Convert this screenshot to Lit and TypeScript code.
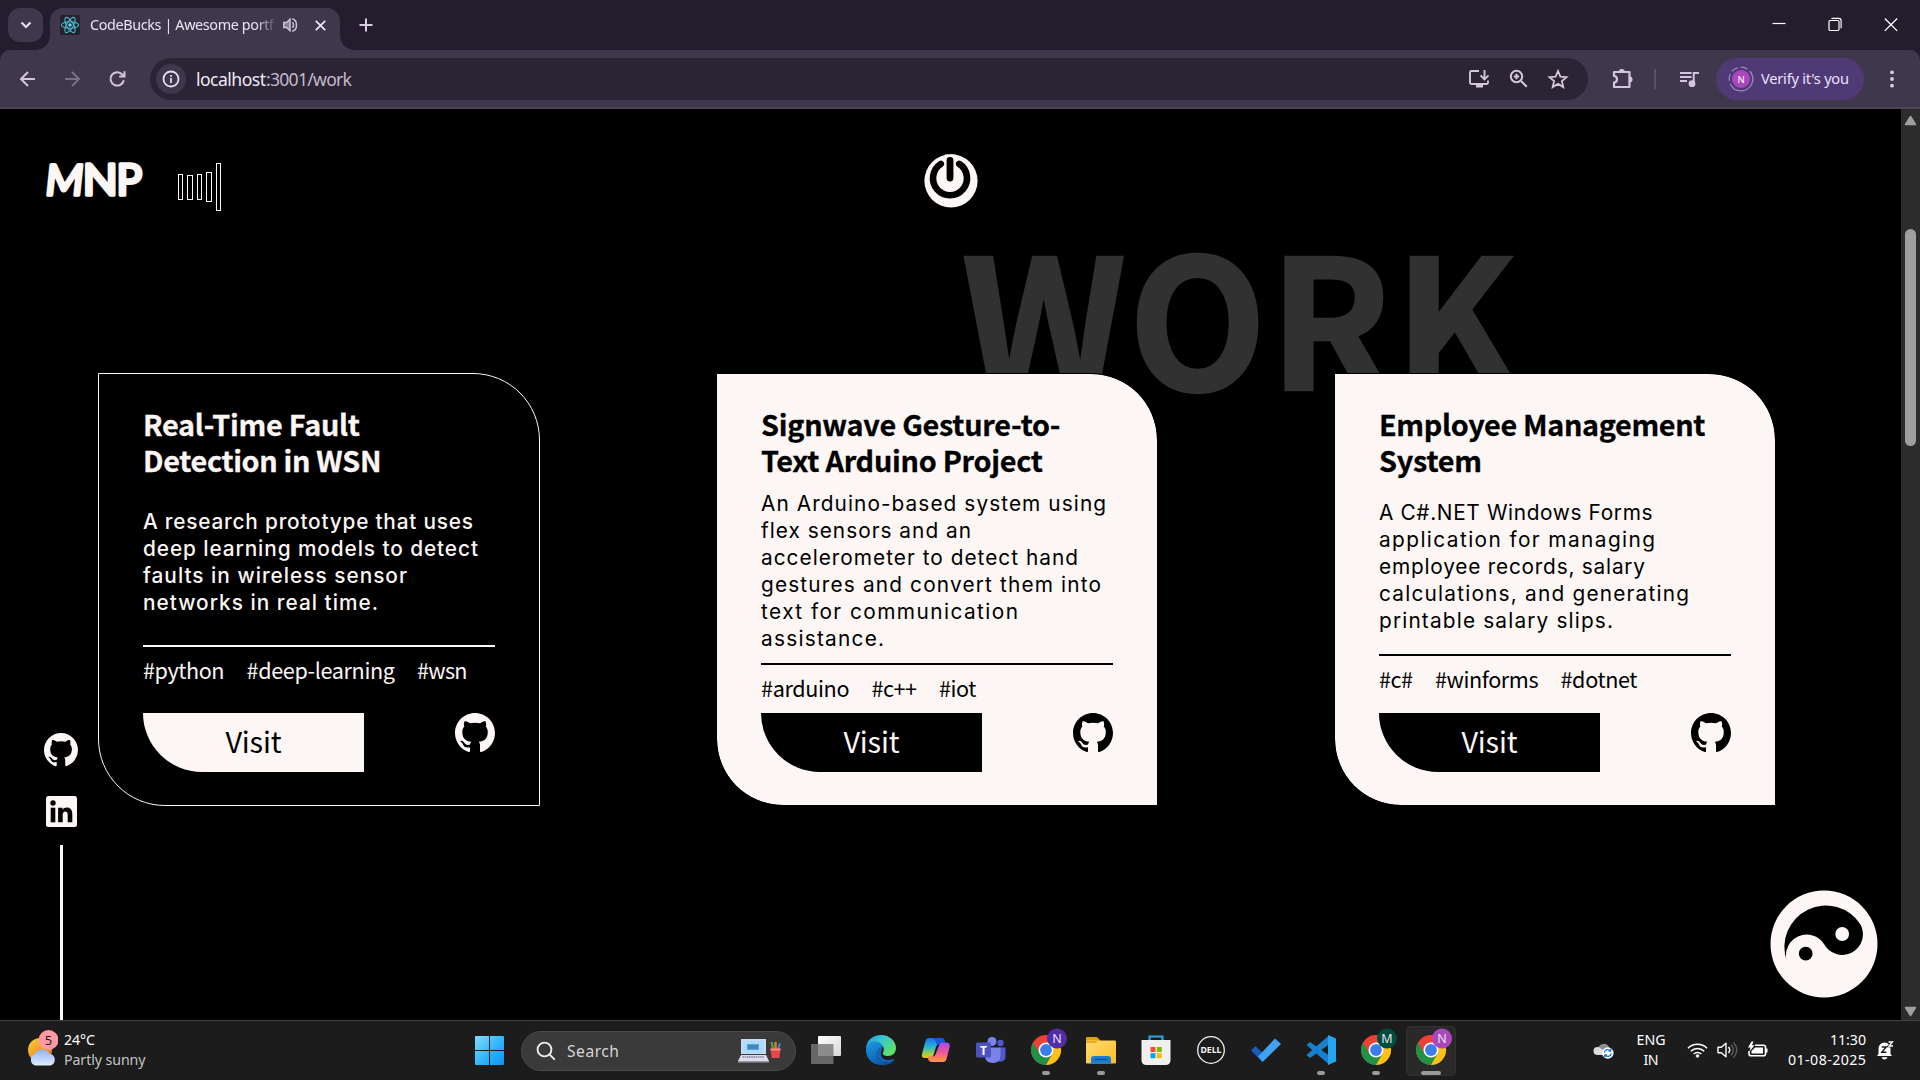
import { LitElement, html, svg, css, nothing } from "lit";
import { customElement, property } from "lit/decorators.js";
import { classMap } from "lit/directives/class-map.js";

/* One line of text whose tracking is computed so that it spans `w` pixels. */
@customElement("fit-text")
class FitText extends LitElement {
  static styles = css`
    :host { display: inline-block; white-space: nowrap; }
    .line { display: inline-block; white-space: pre; }
  `;
  @property() text = "";
  @property({ type: Number }) w = 0;

  updated() {
    const el = this.renderRoot.querySelector(".line") as HTMLElement;
    el.style.letterSpacing = "0px";
    const natural = el.getBoundingClientRect().width;
    const ls = (this.w - natural) / Math.max(1, this.text.length - 1);
    el.style.letterSpacing = ls.toFixed(3) + "px";
    el.style.marginRight = (-ls).toFixed(3) + "px";
  }

  render() {
    return html`<span class="line">${this.text}</span>`;
  }
}

const githubPath =
  "M12 0C5.37 0 0 5.37 0 12c0 5.31 3.435 9.795 8.205 11.385.6.105.825-.255.825-.57 0-.285-.015-1.23-.015-2.235-3.015.555-3.795-.735-4.035-1.41-.135-.345-.72-1.41-1.23-1.695-.42-.225-1.02-.78-.015-.795.945-.015 1.62.87 1.845 1.23 1.08 1.815 2.805 1.305 3.495.99.105-.78.42-1.305.765-1.605-2.67-.3-5.46-1.335-5.46-5.925 0-1.305.465-2.385 1.23-3.225-.12-.3-.54-1.53.12-3.18 0 0 1.005-.315 3.3 1.23.96-.27 1.98-.405 3-.405s2.04.135 3 .405c2.295-1.56 3.3-1.23 3.3-1.23.66 1.65.24 2.88.12 3.18.765.84 1.23 1.905 1.23 3.225 0 4.605-2.805 5.625-5.475 5.925.435.375.81 1.095.81 2.22 0 1.605-.015 2.895-.015 3.3 0 .315.225.69.825.57A12.02 12.02 0 0024 12c0-6.63-5.37-12-12-12z";

const github = (size: number) => html`
  <svg width=${size} height=${size} viewBox="0 0 24 24" fill="currentColor"><path d=${githubPath}></path></svg>`;

type Line = [string, number];
interface Project { title: Line[]; desc: Line[]; tags: Line[]; dark: boolean; }

const projects: Project[] = [
  {
    dark: true,
    title: [["Real-Time Fault", 217], ["Detection in WSN", 238.5]],
    desc: [
      ["A research prototype that uses", 330],
      ["deep learning models to detect", 335],
      ["faults in wireless sensor", 264],
      ["networks in real time.", 235],
    ],
    tags: [["#python", 81.5], ["#deep-learning", 148.5], ["#wsn", 50.5]],
  },
  {
    dark: false,
    title: [["Signwave Gesture-to-", 299.5], ["Text Arduino Project", 282]],
    desc: [
      ["An Arduino-based system using", 345],
      ["flex sensors and an", 210],
      ["accelerometer to detect hand", 317],
      ["gestures and convert them into", 340],
      ["text for communication", 257],
      ["assistance.", 123],
    ],
    tags: [["#arduino", 88.5], ["#c++", 45.5], ["#iot", 37.5]],
  },
  {
    dark: false,
    title: [["Employee Management", 326.5], ["System", 103]],
    desc: [
      ["A C#.NET Windows Forms", 273.5],
      ["application for managing", 276],
      ["employee records, salary", 266],
      ["calculations, and generating", 310],
      ["printable salary slips.", 234],
    ],
    tags: [["#c#", 34], ["#winforms", 103.5], ["#dotnet", 77]],
  },
];

@customElement("work-card")
class WorkCard extends LitElement {
  static styles = css`
    :host { display: block; }
    .card {
      box-sizing: border-box; width: 442px; height: 433px; padding: 33px 44px;
      border: 1px solid #000; border-radius: 0 67px 0 67px;
      background: #fcf6f4; color: #000; background-clip: padding-box;
      display: flex; flex-direction: column; justify-content: space-between;
      font-family: "Noto Sans CJK SC", sans-serif;
    }
    .card.dark { background: #000; color: #fcf6f4; border-color: #fcf6f4; }
    .title { margin: -1px 0 1px; font-size: 28.8px; font-weight: 700; height: 72px; -webkit-text-stroke: .3px currentColor; }
    .row { display: block; height: 36px; line-height: 36px; }
    .desc { font-family: "Inter", sans-serif; font-size: 20.8px; }
    .dark .desc { font-weight: 500; }
    .desc .row { height: 27px; line-height: 27px; }
    .tags {
      border-top: 2px solid currentColor; height: 37px; display: flex; gap: 22px;
      font-size: 21.6px; line-height: 46px;
    }
    .foot { display: flex; justify-content: space-between; height: 59px; }
    .visit {
      width: 221px; height: 59px; border-radius: 0 0 0 60px; background: #000; color: #fcf6f4;
      font-size: 28.8px; line-height: 56px; text-align: center; text-decoration: none;
    }
    .dark .visit { background: #fcf6f4; color: #000; }
    svg { display: block; }
    .git { color: inherit; height: 40px; }
  `;
  @property({ attribute: false }) project!: Project;

  render() {
    const p = this.project;
    const line = ([t, w]: Line) => html`<span class="row"><fit-text .text=${t} .w=${w}></fit-text></span>`;
    return html`
      <article class=${classMap({ card: true, dark: p.dark })}>
        <h2 class="title">${p.title.map(line)}</h2>
        <div class="desc">${p.desc.map(line)}</div>
        <div class="tags">${p.tags.map(([t, w]) => html`<fit-text .text=${t} .w=${w}></fit-text>`)}</div>
        <footer class="foot">
          <a class="visit"><fit-text .text=${"Visit"} .w=${56}></fit-text></a>
          <a class="git">${github(40)}</a>
        </footer>
      </article>`;
  }
}

@customElement("browser-bar")
class BrowserBar extends LitElement {
  static styles = css`
    :host { display: block; font-family: "Noto Sans", "Open Sans", sans-serif; }
    svg { display: block; flex: none; }
    .strip { height: 50px; background: #241d2d; display: flex; align-items: flex-start; }
    .chevron {
      width: 35px; height: 34px; margin: 8px 7px 0 8px; border-radius: 12px; background: #3f374b;
      display: grid; place-items: center;
    }
    .tab {
      width: 290px; height: 42px; margin-top: 8px; background: #3f374b; border-radius: 13px 13px 0 0;
      display: flex; align-items: center; box-sizing: border-box; padding: 0 0 8px 10px; position: relative;
    }
    .tab::before, .tab::after {
      content: ""; position: absolute; bottom: 0; width: 14px; height: 14px;
    }
    .tab::before { left: -14px; background: radial-gradient(circle at 0 0, transparent 13.5px, #3f374b 14px); }
    .tab::after { right: -14px; background: radial-gradient(circle at 100% 0, transparent 13.5px, #3f374b 14px); }
    .name {
      width: 184px; margin-left: 10px; overflow: hidden; font-size: 14.4px; line-height: 22px; color: #ece4f2;
      -webkit-mask-image: linear-gradient(90deg, #000 90%, transparent 102%);
      mask-image: linear-gradient(90deg, #000 90%, transparent 102%);
    }
    .sound { margin-left: 9px; }
    .close { margin-left: 17px; }
    .plus { margin: 18px 0 0 19px; }
    .grow { flex: 1; }
    .win { display: flex; gap: 42px; margin: 17px 22px 0 0; }
    .bar {
      height: 59px; box-sizing: border-box; background: #3f374b; border-bottom: 2px solid #4c4653;
      border-radius: 10px 10px 0 0; display: flex; align-items: center; position: relative;
      color: #d3c5df;
    }
    .shell { background: #241d2d; }
    .nav { display: flex; gap: 26px; margin-left: 18px; width: 132px; }
    .dim { opacity: .4; }
    .url {
      width: 1438px; height: 42px; border-radius: 21px; background: #2b2435; display: flex; align-items: center;
      box-sizing: border-box; padding: 0 19px 0 6px;
    }
    .info { width: 30px; height: 30px; border-radius: 50%; background: #3f374b; display: grid; place-items: center; }
    .host { margin-left: 10px; font-size: 17.6px; color: #efe9f5; line-height: 24px; }
    .path { font-size: 17.6px; color: #c3bacb; line-height: 24px; }
    .acts { display: flex; gap: 18.500px; color: #d3c8d8; }
    .ext { margin-left: 24px; }
    .sep { width: 2px; height: 20px; background: #5b4f6c; margin-left: 20px; }
    .media { margin-left: 23px; }
    .verify {
      width: 148px; height: 42px; border-radius: 21px; background: #503a76; margin-left: 16px;
      display: flex; align-items: center; color: #ece0fb; font-size: 14.6px; box-sizing: border-box; padding-left: 12px;
    }
    .verify fit-text { margin: -2px 0 0 7px; }
    .menu { margin-left: 24px; }
  `;

  render() {
    return html`
      <div class="strip">
        <div class="chevron">
          <svg width="12" height="12" viewBox="0 0 12 12" fill="none" stroke="#e6dcee" stroke-width="2.2"><path d="M1.5 3.5 6 8l4.500-4.500"></path></svg>
        </div>
        <div class="tab">
          <svg width="20" height="20" viewBox="0 0 20 20">
            <rect width="20" height="20" rx="2" fill="#22242a"></rect>
            <g fill="none" stroke="#4fb8d4" stroke-width="1.1">
              <ellipse cx="10" cy="10" rx="8.600" ry="3.300"></ellipse>
              <ellipse cx="10" cy="10" rx="8.600" ry="3.300" transform="rotate(60 10 10)"></ellipse>
              <ellipse cx="10" cy="10" rx="8.600" ry="3.300" transform="rotate(120 10 10)"></ellipse>
            </g>
            <circle cx="10" cy="10" r="1.700" fill="#6fd8ee"></circle>
          </svg>
          <div class="name"><fit-text .text=${"CodeBucks | Awesome portf"} .w=${184}></fit-text></div>
          <svg class="sound" width="15" height="16" viewBox="0 0 15 16" fill="none" stroke="#cdc3d6" stroke-width="1.5">
            <path d="M.8 5.500h2.800l3.400-3.300v11.600L3.600 10.500H.8z" fill="#887f95"></path>
            <path d="M9.300 5.200c1.600 1.400 1.600 4.200 0 5.600M9.300 1.700c5.600 1.700 5.600 10.900 0 12.600"></path>
          </svg>
          <svg class="close" width="11" height="11" viewBox="0 0 11 11" stroke="#ece4f2" stroke-width="1.800"><path d="M.8.800l9.400 9.400M10.200.800.800 10.200"></path></svg>
        </div>
        <svg class="plus" width="14" height="14" viewBox="0 0 14 14" stroke="#d9cbe6" stroke-width="2"><path d="M7 .500v13M.500 7h13"></path></svg>
        <div class="grow"></div>
        <div class="win">
          <svg width="14" height="15" stroke="#fff" stroke-width="1.200"><path d="M.500 6.500h13"></path></svg>
          <svg width="14" height="15" fill="none" stroke="#fff" stroke-width="1.200"><rect x="1" y="3.500" width="10" height="10" rx="1.200"></rect><path d="M3.500 1.300h7.300q2.300 0 2.300 2.300v7.600"></path></svg>
          <svg width="14" height="15" stroke="#fff" stroke-width="1.300"><path d="M.800 1.500l12.400 12.400M13.200 1.500.800 13.900"></path></svg>
        </div>
      </div>
      <div class="shell"><div class="bar">
        <div class="nav">
          <svg width="19" height="18" viewBox="0 0 19 18" fill="none" stroke="currentColor" stroke-width="2"><path d="M17 9H3.500M10 2 3 9l7 7"></path></svg>
          <svg class="dim" width="19" height="18" viewBox="0 0 19 18" fill="none" stroke="currentColor" stroke-width="2"><path d="M2 9h13.500M9 2l7 7-7 7"></path></svg>
          <svg width="19" height="18" viewBox="0 0 19 18" fill="none" stroke="currentColor" stroke-width="2"><path d="M15.800 10.200A6.700 6.700 0 1 1 14.300 4.500L16 6.300M16.500 1.200v5.300h-5.300"></path></svg>
        </div>
        <div class="url">
          <div class="info">
            <svg width="18" height="18" viewBox="0 0 18 18" fill="none" stroke="#e6dcee" stroke-width="1.800"><circle cx="9" cy="9" r="7.500"></circle><path d="M9 8v5M9 5v1.800"></path></svg>
          </div>
          <span class="host"><fit-text .text=${"localhost"} .w=${70}></fit-text></span>
          <span class="path"><fit-text .text=${":3001/work"} .w=${86}></fit-text></span>
          <div class="grow"></div>
          <div class="acts">
            <svg width="22" height="20" viewBox="0 0 22 20" fill="none" stroke="currentColor" stroke-width="1.900"><path d="M11 2H3.500Q2 2 2 3.500v10Q2 15 3.500 15h15q1.500 0 1.500-1.500v-2M16.500 1v9M12.500 6.300l4 4 4-4"></path><path d="M8 17.200h7" stroke-width="2.600"></path></svg>
            <svg width="20" height="20" viewBox="0 0 20 20" fill="none" stroke="currentColor" stroke-width="2"><circle cx="7.500" cy="7.500" r="5.700"></circle><path d="M11.800 11.800l6 6M7.500 4.800v5.400M4.800 7.500h5.400"></path></svg>
            <svg width="22" height="20" viewBox="0 0 22 20" fill="none" stroke="currentColor" stroke-width="1.800"><path d="M11 2l2.400 5.600 6.100.500-4.600 4 1.400 6-5.300-3.200-5.300 3.200 1.400-6-4.600-4 6.100-.500z"></path></svg>
          </div>
        </div>
        <svg class="ext" width="22" height="22" viewBox="0 0 22 22" fill="none" stroke="currentColor" stroke-width="2.200" stroke-linejoin="round"><path d="M2 4h15.500v15H2v-4.300c4-.600 4-6.200 0-6.800z"></path><path d="M7.500 4a2 2 0 0 1 4.500 0zM17.500 9.200a2 2 0 0 1 0 4.600z" fill="currentColor" stroke-width="1.500"></path></svg>
        <div class="sep"></div>
        <svg class="media" width="21" height="18" viewBox="0 0 21 18" fill="none" stroke="currentColor" stroke-width="2"><path d="M1 3h11.500M1 7h11.500M1 11h7M14.700 14V3H20"></path><circle cx="13" cy="13.700" r="2.400" fill="currentColor"></circle></svg>
        <div class="verify">
          <svg width="26" height="26" viewBox="0 0 26 26"><circle cx="13" cy="13" r="11.800" fill="none" stroke="#9a82c4" stroke-width="1.300" stroke-dasharray="32 3 7 3 7 3 7 3"></circle><circle cx="13" cy="13" r="9" fill="#ab47bc"></circle><text x="13" y="16.500" font-size="9.500" text-anchor="middle" fill="#fff">N</text></svg>
          <fit-text .text=${"Verify it's you"} .w=${88}></fit-text>
        </div>
        <svg class="menu" width="8" height="20" viewBox="0 0 8 20" fill="#d9cbe6"><circle cx="4" cy="3.300" r="1.900"></circle><circle cx="4" cy="10" r="1.900"></circle><circle cx="4" cy="16.700" r="1.900"></circle></svg>
      </div></div>`;
  }
}

const chrome = (letter: string, color: string) => svg`
  <g transform="translate(10 10)">
    <circle cx="15" cy="15" r="15" fill="#ea4335"></circle>
    <path d="M2.010 7.500A15 15 0 0 0 15 30L21.500 18.750H8.500z" fill="#1f9246"></path>
    <path d="M28 7.500A15 15 0 0 1 15 30l6.500-11.250L15 7.500z" fill="#fbc116"></path>
    <circle cx="15" cy="15" r="7.500" fill="#fff"></circle><circle cx="15" cy="15" r="5.900" fill="#3b7ded"></circle>
  </g>
  <circle cx="36" cy="13.500" r="10" fill=${color}></circle>
  <text x="36" y="18" font-size="12.500" text-anchor="middle" fill="#e8e0ee">${letter}</text>`;

const apps = [
  { run: 0, art: svg`<defs><linearGradient id="tv" x1="0" y1="0" x2="1" y2="1"><stop stop-color="#fff"></stop><stop offset="1" stop-color="#d8d8d8"></stop></linearGradient></defs>
      <rect x="17" y="11" width="23" height="20" rx="1" fill="url(#tv)"></rect><rect x="10" y="19" width="22.500" height="20" rx="1" fill="#787878" fill-opacity=".82"></rect>` },
  { run: 0, art: svg`<defs><linearGradient id="e1" x1="0" y1="0" x2="1" y2=".5"><stop stop-color="#1f9ee0"></stop><stop offset=".5" stop-color="#37c6d0"></stop><stop offset="1" stop-color="#5fe06a"></stop></linearGradient><linearGradient id="e2" x1="0" y1="0" x2=".6" y2="1"><stop stop-color="#1b9de2"></stop><stop offset="1" stop-color="#0b55a8"></stop></linearGradient></defs>
      <path d="M10 23C11 15 17 10 25 10c9 0 15 6.500 15 13 0 5-3.500 8-8 8-3.500 0-6-1.500-5-3.500 3-5-2-10-8-9-5 .700-8 3-9 4.500z" fill="url(#e1)"></path>
      <path d="M10 25c0-6 5-9.500 10.500-8.500 4 .700 6 3.500 6 6-7 .500-8 10-1 13.500 5 2.500 9 1.500 12.500-.500C35 39 30.500 40 26 40c-9 0-16-6-16-15z" fill="url(#e2)"></path>
      <path d="M26.500 22.500c-7 .500-8 10-1 13.500 5 2.500 9.500 1.500 12.500-1 .500-1-.200-1.300-1-1-5 2.500-11 .500-12-4-.400-3 .500-5 1.500-7.500z" fill="#1266b8"></path>` },
  { run: 0, art: svg`<defs><linearGradient id="c1" x1="0" y1="0" x2="0" y2="1"><stop stop-color="#1b6ff0"></stop><stop offset=".45" stop-color="#27b5d8"></stop><stop offset=".75" stop-color="#8fd14a"></stop><stop offset="1" stop-color="#f4c320"></stop></linearGradient><linearGradient id="c2" x1="0" y1="0" x2="0" y2="1"><stop stop-color="#a24af0"></stop><stop offset=".5" stop-color="#f0569a"></stop><stop offset="1" stop-color="#fb9a3c"></stop></linearGradient></defs>
      <path d="M18 13h12q3 0 3.500 3l.800 3h-6q-2.500 0-3.200 2.500L22.500 30q-.800 3-4 3H14q-4 0-3-4l3.500-13q.800-3 3.500-3z" fill="url(#c1)"></path>
      <path d="M18 13h12q3 0 3.500 3l.800 3h-6l-2 1-2-4q-1-3-6.300-3z" fill="#1c56d8"></path>
      <path d="M32 37H21q-3 0-4-3l-.500-2.500h5q2.500 0 3.200-2.500L28 20.500q.800-3 4-3H35q4.500 0 3.700 4l-3 12q-.900 3.500-3.700 3.500z" fill="url(#c2)"></path>` },
  { run: 0, art: svg`<circle cx="26" cy="16.500" r="4.500" fill="#7b83eb"></circle><circle cx="34.500" cy="18" r="3.200" fill="#5059c9"></circle>
      <path d="M33 22.500h6.500v9q0 5-6.500 5.500z" fill="#5059c9"></path><path d="M19 22.500h15.500V31q0 7-7.700 7-7.800 0-7.800-7z" fill="#7b83eb"></path>
      <rect x="10" y="17.500" width="15" height="15" rx="1.500" fill="#4b53bc"></rect><text x="17.500" y="29.500" font-size="12" font-weight="700" text-anchor="middle" fill="#fff">T</text>` },
  { run: 8, art: chrome("N", "#512da8") },
  { run: 8, art: svg`<defs><linearGradient id="f1" x1="0" y1="0" x2="1" y2="1"><stop stop-color="#ffdc70"></stop><stop offset="1" stop-color="#fbbd28"></stop></linearGradient></defs>
      <path d="M10 13q0-1 1-1h9q1 0 1.700.700L24 15v6H10z" fill="#e0a110"></path><rect x="10" y="15.500" width="30" height="23" rx="1.200" fill="url(#f1)"></rect><path d="M10 21v-5h12l-2 2H10z" fill="#e9ad22"></path>
      <path d="M15 38.500V34q0-3 3-3h14q3 0 3 3v4.500z" fill="#1a7fd4"></path><path d="M18.500 34.500h13" stroke="#0b4f93" stroke-width="1.300"></path>` },
  { run: 0, art: svg`<path d="M18.500 17v-5.500h13V17" fill="none" stroke="#2fa4dd" stroke-width="2.200"></path><path d="M10.500 15h29v20q0 5-5 5h-19q-5 0-5-5z" fill="#f0f0f0"></path>
      <rect x="19.500" y="22" width="5" height="5" fill="#f25022"></rect><rect x="25.800" y="22" width="5" height="5" fill="#7fba00"></rect><rect x="19.500" y="28.200" width="5" height="5" fill="#00a4ef"></rect><rect x="25.800" y="28.200" width="5" height="5" fill="#ffb900"></rect>` },
  { run: 0, art: svg`<circle cx="25" cy="25" r="13.300" fill="#1c1c1c" stroke="#f2f2f2" stroke-width="1.300"></circle><text x="25" y="28.300" font-size="9" font-weight="700" textLength="21" lengthAdjust="spacingAndGlyphs" text-anchor="middle" fill="#f2f2f2">DELL</text>` },
  { run: 0, art: svg`<path d="M10 25.500l4.500-4.500 8 8-1 8z" fill="#185abd"></path><path d="M17 31.500 34 13.500l6 5.500L21.700 37z" fill="#41a1ee"></path>` },
  { run: 8, art: svg`<path d="M33 10.500v9L14 33l-3.500-3z" fill="#1b81c9"></path><path d="M33 39.500v-9L14 17l-3.500 3z" fill="#1482d0"></path><path d="M32 10l8 3.500v23L32 40z" fill="#27a5f1"></path>` },
  { run: 8, art: chrome("M", "#004d40") },
  { run: 20, art: chrome("N", "#ab47bc") },
];

@customElement("task-bar")
class TaskBar extends LitElement {
  static styles = css`
    :host { display: block; font-family: "Noto Sans", "Open Sans", sans-serif; color: #fff; }
    .bar {
      height: 60px; box-sizing: border-box; border-top: 1px solid #414141; background: #1c1c1c;
      display: flex; align-items: center; font-size: 14.2px; line-height: 20px;
    }
    svg { display: block; flex: none; }
    text { font-family: "Noto Sans", sans-serif; }
    .weather { display: flex; width: 475px; margin-top: -2px; }
    .weather svg { margin-left: 26px; }
    .stack { display: flex; flex-direction: column; margin-left: 6px; }
    .muted { color: #c4c4c4; }
    .search {
      width: 275px; height: 40px; box-sizing: border-box; margin: 0 3px 0 17px; border-radius: 20px;
      background: #3a3a3a; border: 1px solid #4a4a4a; display: flex; align-items: center; padding: 0 13px 0 14px;
      color: #d6d6d6; font-size: 15.6px;
    }
    .search fit-text { margin-left: 11px; }
    .grow { flex: 1; }
    .app {
      width: 50px; height: 50px; margin: 0 3px 0 2px; position: relative; border-radius: 5px;
    }
    .app svg { margin-top: -1px; }
    .app.active { background: #292929; box-shadow: inset 0 0 0 1px #313131; }
    .pip { position: absolute; left: 0; right: 0; bottom: 1px; margin: auto; height: 4px; border-radius: 2px; background: #9a9a9a; }
    .tray { display: flex; align-items: center; margin-top: -1px; }
    .lang { width: 32px; margin-left: 21px; display: flex; flex-direction: column; align-items: center; }
    .wifi { margin-left: 20px; }
    .gap { margin-left: 9px; }
    .clock { width: 80px; margin-left: 17px; display: flex; flex-direction: column; align-items: flex-end; }
    .bell { margin: 0 25px 0 10px; }
  `;

  render() {
    return html`
      <div class="bar">
        <div class="weather">
          <svg width="32" height="40" viewBox="0 0 32 40">
            <defs>
              <linearGradient id="sun" x1="0" y1="0" x2="1" y2="1"><stop stop-color="#f7cf3a"></stop><stop offset="1" stop-color="#ee6a12"></stop></linearGradient>
              <linearGradient id="cl" x1="0" y1="0" x2="0" y2="1"><stop stop-color="#8fb4f5"></stop><stop offset="1" stop-color="#e0edfd"></stop></linearGradient>
            </defs>
            <circle cx="14" cy="20" r="12" fill="url(#sun)"></circle>
            <path d="M9 35.500a6 6 0 0 1-.500-11.200 8.500 8.500 0 0 1 15-.500 6 6 0 0 1 1 11.700z" fill="url(#cl)"></path>
            <circle cx="22.500" cy="10" r="10" fill="#ff99a4"></circle>
            <text x="22.500" y="15" font-size="13" text-anchor="middle" fill="#1c1c1c">5</text>
          </svg>
          <div class="stack">
            <fit-text .text=${"24°C"} .w=${31}></fit-text>
            <fit-text class="muted" .text=${"Partly sunny"} .w=${81.5}></fit-text>
          </div>
        </div>
        <svg width="29" height="29" viewBox="0 0 29 29">
          <defs><linearGradient id="w" x1="0" y1="0" x2="1" y2="1" ><stop stop-color="#84dcff"></stop><stop offset=".5" stop-color="#35b8fb"></stop><stop offset="1" stop-color="#0a91f5"></stop></linearGradient></defs>
          <path d="M1 0h13v14H0V1q0-1 1-1zM15 0h13q1 0 1 1v13H15zM0 15h14v14H1q-1 0-1-1zM15 15h14v13q0 1-1 1H15z" fill="url(#w)"></path>
        </svg>
        <div class="search">
          <svg width="20" height="20" viewBox="0 0 20 20" fill="none" stroke="#ececec" stroke-width="1.900" stroke-linecap="round"><circle cx="8.500" cy="8.500" r="6.900"></circle><path d="M13.700 13.700l4.500 4.500"></path></svg>
          <fit-text .text=${"Search"} .w=${52}></fit-text>
          <div class="grow"></div>
          <svg width="44" height="28" viewBox="0 0 44 28">
            <path d="M3 2h25v15H3z" fill="#ccd9ee"></path><path d="M5 4h21v12H5z" fill="#a9dcff"></path><path d="M9 7h12v6H9z" fill="#5e9fd4"></path><path d="M10 9h10M10 11h10" stroke="#2d6ca8"></path>
            <path d="M3 18h25l3 6H0z" fill="#dfdbe8"></path><path d="M4.500 20h22" stroke="#9a95ac" stroke-width="1.800" stroke-dasharray="1.500 .700"></path><path d="M0 24h31v1.500H0z" fill="#9d98ad"></path>
            <path d="M35 12l-1.500-7" stroke="#4fae4a" stroke-width="2"></path><path d="M37.500 12V5" stroke="#c58a2b" stroke-width="2.500"></path><path d="M40 12l2-5.500" stroke="#4687d6" stroke-width="2"></path>
            <path d="M32.500 11.500h10l-1.200 9.500h-7.600z" fill="#e8454c"></path><path d="M32.500 11.500h10v2h-10z" fill="#ff8a86"></path>
          </svg>
        </div>
        ${apps.map((a) => html`
          <div class=${classMap({ app: true, active: a.run > 8 })}>
            <svg width="50" height="50" viewBox="0 0 50 50">${a.art}</svg>
            ${a.run ? html`<span class="pip" style="width:${a.run}px"></span>` : nothing}
          </div>`)}
        <div class="grow"></div>
        <div class="tray">
          <svg width="21" height="18" viewBox="0 0 21 18">
            <path d="M5 8a6 6 0 0 1 10.500-3l1.500 6-8 3z" fill="#8e8e8e"></path><path d="M4.500 14a4 4 0 0 1 0-8q2 0 4 2l5 3-1 3z" fill="#dcdcdc"></path>
            <circle cx="14.800" cy="12" r="5.800" fill="#fff"></circle><path d="M11.300 11.500a3.600 3.600 0 0 1 6.300-1.600M18.300 12.500a3.600 3.600 0 0 1-6.300 1.600M17.800 7.800v2.300h-2.300M11.800 16.200v-2.300h2.300" fill="none" stroke="#1976d2" stroke-width="1.300"></path>
          </svg>
          <div class="lang"><fit-text .text=${"ENG"} .w=${29}></fit-text><fit-text .text=${"IN"} .w=${15}></fit-text></div>
          <svg class="wifi" width="21" height="16" viewBox="0 0 21 16" fill="none" stroke="#fff" stroke-width="1.500"><path d="M1 6.200a13.500 13.500 0 0 1 19 0M3.800 9.200a9.500 9.500 0 0 1 13.400 0M6.700 12a5.500 5.500 0 0 1 7.600 0"></path><circle cx="10.500" cy="14" r="1.300" fill="#fff" stroke-width="1"></circle></svg>
          <svg class="gap" width="21" height="18" viewBox="0 0 21 18" fill="none" stroke="#fff" stroke-width="1.400"><path d="M1 6.300h3.300L9 2.200v13.600L4.300 11.700H1z" stroke-linejoin="round"></path><path d="M11.500 6q2.500 3 0 6"></path><path d="M14 3.800q4.500 5.200 0 10.400M16.500 1.500q6.500 7.500 0 15" stroke="#5e5e5e"></path></svg>
          <svg class="gap" width="22" height="18" viewBox="0 0 22 18" fill="none" stroke="#fff" stroke-width="1.600"><path d="M8 4.200h8.500q2 0 2 2v6.600q0 2-2 2H4q-2 0-2-2V10"></path><path d="M4.500 12.500V10L8 6.500h8v6z" fill="#fff" stroke="none"></path><path d="M19.500 7.500v4" stroke-width="2"></path><path d="M4.500.500 1 6.500h2.500L2.500 10.500 7.500 4.300H5L6.500.500z" fill="#fff" stroke="none"></path></svg>
          <div class="clock"><fit-text .text=${"11:30"} .w=${36}></fit-text><fit-text .text=${"01-08-2025"} .w=${78}></fit-text></div>
          <svg class="bell" width="19" height="20" viewBox="0 0 19 20"><path d="M2.500 14V8.500a6 6 0 0 1 12 0V14l1.500 2H1z" fill="#fff"></path><path d="M5.500 17.200h6q-.800 2.300-3 2.300t-3-2.300z" fill="#fff"></path><path d="M5.800 7h4.400l-4.400 5.300h4.600" fill="none" stroke="#1c1c1c" stroke-width="1.400"></path><path d="M12.500 2h4L13 6h4" fill="none" stroke="#1c1c1c" stroke-width="2.600"></path><path d="M12.500 2h4L13 6h4" fill="none" stroke="#fff" stroke-width="1.300"></path></svg>
        </div>
      </div>`;
  }
}

/* Bars of the music toggle: height of each, in pixels. */
const bars = [26, 25, 26, 30, 48];

@customElement("app-root")
class AppRoot extends LitElement {
  static styles = css`
    :host { display: block; width: 1920px; height: 1080px; overflow: hidden; background: #000; }
    svg { display: block; }
    .view { display: flex; height: 911px; }
    .page { position: relative; width: 1901px; height: 911px; overflow: hidden; background: #000; color: #fcf6f4; }
    .top { display: flex; height: 264px; position: relative; }
    .logo { margin: 46px 0 0 40px; }
    .logo text { font-family: "Lato", sans-serif; }
    .music { display: flex; align-items: center; gap: 4px; height: 48px; margin: 54px 0 0 30px; }
    .beat { width: 5.400px; box-sizing: border-box; border: 1px solid #fcf6f4; }
    .power { margin: 45px 0 0 703px; }
    .big {
      position: absolute; left: 961.500px; top: 103px; font: 700 180px/200px "Noto Sans CJK SC", sans-serif;
      color: #313131; -webkit-text-stroke: 2.400px #313131;
    }
    .cards { position: relative; display: flex; gap: 176px; padding-left: 98px; }
    .social {
      position: absolute; left: 43.500px; top: 624px; width: 35px; display: flex; flex-direction: column; align-items: center;
    }
    .in { margin-top: 29px; }
    .rule { width: 3px; height: 175px; background: #fcf6f4; margin-top: 18px; }
    .yin { position: absolute; left: 1770px; top: 781px; }
    .scroll { width: 19px; background: #2c2c2c; display: flex; flex-direction: column; align-items: center; }
    .thumb { width: 11px; height: 217px; border-radius: 6px; background: #9f9f9f; margin-top: 102px; }
    .up { margin-top: 6px; }
    .down { margin: auto 0 2px; }
  `;

  render() {
    return html`
      <browser-bar></browser-bar>
      <div class="view">
        <main class="page">
          <div class="big"><fit-text .text=${"WORK"} .w=${556.5}></fit-text></div>
          <header class="top">
            <svg class="logo" width="108" height="50" viewBox="0 0 108 50">
              <g fill="#fcf6f4" stroke="#fcf6f4" stroke-width="3.600" stroke-linejoin="round" font-size="42" font-weight="400">
                <text x="4" y="40" textLength="38" lengthAdjust="spacingAndGlyphs" transform="translate(4.500 0) skewX(-6)">M</text>
                <text x="42.800" y="40" textLength="35" lengthAdjust="spacingAndGlyphs">N</text>
                <text x="76.500" y="40" textLength="25.500" lengthAdjust="spacingAndGlyphs">P</text>
              </g>
            </svg>
            <div class="music">${bars.map((h) => html`<span class="beat" style="height:${h}px"></span>`)}</div>
            <svg class="power" width="54" height="54" viewBox="924 153.500 54 54">
              <circle cx="951" cy="180.400" r="26.600" fill="#fcf6f4"></circle>
              <path d="M940.800 163.400a17 17 0 1 0 18.400 0" fill="none" stroke="#000" stroke-width="6.600" stroke-linecap="round"></path>
              <path d="M950 154v25" stroke="#fcf6f4" stroke-width="10.500"></path>
              <path d="M950 160v17.500" stroke="#000" stroke-width="6.800" stroke-linecap="round"></path>
            </svg>
          </header>
          <section class="cards">${projects.map((p) => html`<work-card .project=${p}></work-card>`)}</section>
          <aside class="social">
            ${github(34)}
            <svg class="in" width="31" height="31" viewBox="0 0 31 31">
              <rect width="31" height="31" rx="2.500" fill="#fcf6f4"></rect>
              <circle cx="7" cy="7" r="2.700" fill="#000"></circle><rect x="4.700" y="11.700" width="4.600" height="14.600" fill="#000"></rect>
              <path d="M12.100 11.700h4.400v2c2.300-3.700 9.800-3.400 9.800 4v8.600h-4.600v-7.500c0-4.600-5-4.300-5 0v7.500h-4.600z" fill="#000"></path>
            </svg>
            <div class="rule"></div>
          </aside>
          <svg class="yin" width="108" height="108" viewBox="1770 890 108 108">
            <circle cx="1824" cy="944" r="53.500" fill="#fcf6f4"></circle>
            <path d="M1786.500 960A41.400 41.400 0 0 1 1860.500 924.400A20.700 20.700 0 0 1 1824 944A20.700 20.700 0 0 0 1786.500 960z" fill="#000"></path>
            <circle cx="1805.700" cy="953.700" r="6.900" fill="#000"></circle>
            <circle cx="1842.200" cy="934" r="6.900" fill="#fcf6f4"></circle>
          </svg>
        </main>
        <div class="scroll">
          <svg class="up" width="13" height="12" viewBox="0 0 13 12"><path d="M6.500 1.500 11.500 9.500h-10z" fill="#9f9f9f" stroke="#9f9f9f" stroke-width="1.500" stroke-linejoin="round"></path></svg>
          <div class="thumb"></div>
          <svg class="down" width="13" height="12" viewBox="0 0 13 12"><path d="M6.500 9.500 11.500 1.500h-10z" fill="#9f9f9f" stroke="#9f9f9f" stroke-width="1.500" stroke-linejoin="round"></path></svg>
        </div>
      </div>
      <task-bar></task-bar>`;
  }
}
